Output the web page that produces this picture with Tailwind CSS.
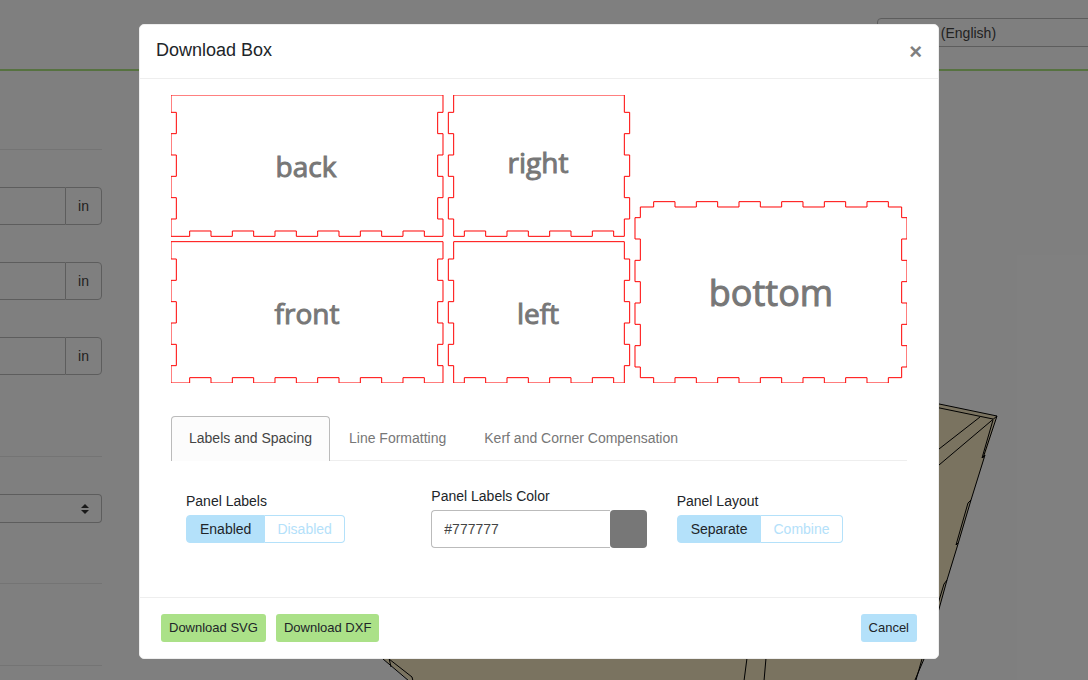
<!DOCTYPE html>
<html lang="en">
<head>
<meta charset="utf-8">
<meta name="viewport" content="width=device-width, initial-scale=1">
<title>Download Box</title>
<script src="https://cdn.jsdelivr.net/npm/@tailwindcss/browser@4"></script>
</head>
<body class="relative h-screen overflow-hidden bg-white font-['Liberation_Sans',Arial,sans-serif] text-sm text-[#444]">

<!-- Page behind the dialog -->
<header class="flex h-[71px] justify-end overflow-hidden border-b-2 border-[#ade480] pt-[18px]">
  <select aria-label="Language" class="-mr-4 h-[29px] w-[227px] shrink-0 appearance-none rounded border border-[#bbb] bg-white px-[13px] text-sm text-[#444]">
    <option>English (English)</option>
  </select>
</header>

<main>
  <section aria-label="Dimensions" class="w-[102px] pt-[78px]">
    <hr class="border-[#e8e8e8]">
    <div class="mt-[37px] flex flex-col gap-[37px]">
      <label class="flex h-[38px]">
        <input aria-label="Width" class="w-0 flex-1 border-y border-[#bbb]">
        <span class="flex w-[37px] items-center justify-center rounded-r border border-[#bbb]">in</span>
      </label>
      <label class="flex h-[38px]">
        <input aria-label="Height" class="w-0 flex-1 border-y border-[#bbb]">
        <span class="flex w-[37px] items-center justify-center rounded-r border border-[#bbb]">in</span>
      </label>
      <label class="flex h-[38px]">
        <input aria-label="Depth" class="w-0 flex-1 border-y border-[#bbb]">
        <span class="flex w-[37px] items-center justify-center rounded-r border border-[#bbb]">in</span>
      </label>
    </div>
    <hr class="mt-[81px] border-[#e8e8e8]">
    <div class="relative mt-[37px]">
      <select aria-label="Material" class="block h-[29px] w-full appearance-none rounded-r border border-l-0 border-[#bbb]"><option></option></select>
      <svg class="pointer-events-none absolute top-[10px] right-[13px] h-[10px] w-2" viewBox="0 0 8 10" fill="#333" aria-hidden="true"><path d="M0 4 4 0 8 4ZM0 6h8L4 10Z"/></svg>
    </div>
    <hr class="mt-[60px] border-[#e8e8e8]">
    <hr class="mt-[81px] border-[#e8e8e8]">
  </section>

  <!-- 3D preview -->
  <svg class="absolute top-0 left-0 h-[680px] w-[1088px]" viewBox="0 0 1088 680" fill="none" stroke="#000" stroke-width="1" aria-hidden="true">
    <path fill="#f4e6c0" stroke="none" d="M383 659 600 340 939 404 997 416 985 456 971 500 958 545 947 580 939 609 924 659 915 680H409Z"/>
    <path d="M920 400 997 416 983 458M930 406 993 419M939 449 980 417M939 465 997 416M993 420 982 458 985 455 971 500 958 544M971 500 968 503 956 545 958 543M958 544 947 580 939 609 924 659 915 680M947 580 944 584 930 630M922 659 916 680M383 659 409 681M389 659 412 677 413 681M389 658 391 667M747 658 744 681M766 658 764 681"/>
  </svg>
</main>

<!-- Dialog -->
<div class="absolute inset-0 flex items-start justify-center bg-black/50 pt-6 pr-[10px]">
  <div role="dialog" aria-modal="true" aria-labelledby="dialog-title" class="w-full max-w-[800px] rounded-[5px] border border-[#eee] bg-white">
    <div class="flex h-[54px] items-center justify-between border-b border-[#eee] px-4">
      <h1 id="dialog-title" class="pb-1 text-lg text-[#212529]">Download Box</h1>
      <button type="button" aria-label="Close" class="text-[22px] leading-6 font-bold text-[#7f7f7f]">×</button>
    </div>

    <div class="px-[31px] pt-4">
      <svg class="block w-full" viewBox="0 0 736 288" role="img" aria-label="Panel layout preview">
        <!-- One panel unit is the material thickness; the sheet is 138 by 54 units -->
        <g transform="scale(5.33333)" fill="none" stroke="#f00" stroke-width="0.1875">
          <path id="wide" d="M0 0H51V3.25H50V7.25H51V11.25H50V15.25H51V19.25H50V23.25H51V26.5H47.5V25.5H43.5V26.5H39.5V25.5H35.5V26.5H31.5V25.5H27.5V26.5H23.5V25.5H19.5V26.5H15.5V25.5H11.5V26.5H7.5V25.5H3.5V26.5H0V23.25H1V19.25H0V15.25H1V11.25H0V7.25H1V3.25H0Z"/>
          <use href="#wide" y="27.5"/>
          <path id="side" d="M53 0H85V3.25H86V7.25H85V11.25H86V15.25H85V19.25H86V23.25H85V26.5H83V25.5H79V26.5H75V25.5H71V26.5H67V25.5H63V26.5H59V25.5H55V26.5H53V23.25H52V19.25H53V15.25H52V11.25H53V7.25H52V3.25H53Z"/>
          <use href="#side" y="27.5"/>
          <path d="M88 21H90.5V20H94.5V21H98.5V20H102.5V21H106.5V20H110.5V21H114.5V20H118.5V21H122.5V20H126.5V21H130.5V20H134.5V21H137V23H138V27H137V31H138V35H137V39H138V43H137V47H138V51H137V53H134.5V54H130.5V53H126.5V54H122.5V53H118.5V54H114.5V53H110.5V54H106.5V53H102.5V54H98.5V53H94.5V54H90.5V53H88V51H87V47H88V43H87V39H88V35H87V31H88V27H87V23H88Z"/>
        </g>
        <g class="font-['Open_Sans',sans-serif] text-[28px]" fill="#777" stroke="#777" stroke-width="1" text-anchor="middle">
          <text x="135" y="82">back</text>
          <text x="367" y="78">right</text>
          <text x="136" y="229">front</text>
          <text x="367" y="229">left</text>
          <text x="600" y="211" class="text-[36px]">bottom</text>
        </g>
      </svg>

      <div role="tablist" class="mt-[33px] flex h-[45px] border-b border-[#eee]">
        <button type="button" role="tab" aria-selected="true" class="-mb-px rounded-t border border-b-0 border-[#bbb] bg-[#fcfcfc] px-[17px] pb-[2px] text-[#444]">Labels and Spacing</button>
        <button type="button" role="tab" aria-selected="false" class="px-[19px] text-[#777]">Line Formatting</button>
        <button type="button" role="tab" aria-selected="false" class="px-[19px] text-[#777]">Kerf and Corner Compensation</button>
      </div>

      <div role="tabpanel" class="grid h-[136px] grid-cols-3 items-start pt-[25px]">
        <div role="group" aria-labelledby="labels-name" class="px-[15px] pt-[5px]">
          <div id="labels-name" class="mb-1 leading-5 text-[#212529]">Panel Labels</div>
          <div class="inline-flex h-7">
            <button type="button" aria-pressed="true" class="rounded-l border border-[#b4e1fa] bg-[#b4e1fa] px-[13px] text-[#212529]">Enabled</button>
            <button type="button" aria-pressed="false" class="rounded-r border border-l-0 border-[#b4e1fa] px-3 text-[#b4e1fa]">Disabled</button>
          </div>
        </div>
        <div class="px-[15px]">
          <label for="color" class="mb-1 block leading-5 text-[#212529]">Panel Labels Color</label>
          <div class="flex h-[38px]">
            <input id="color" value="#777777" class="w-0 flex-1 rounded-l border border-r-0 border-[#bbb] px-3 text-[#444]">
            <button type="button" aria-label="Pick color" class="w-[37px] rounded bg-[#777]"></button>
          </div>
        </div>
        <div role="group" aria-labelledby="layout-name" class="px-[15px] pt-[5px]">
          <div id="layout-name" class="mb-1 leading-5 text-[#212529]">Panel Layout</div>
          <div class="inline-flex h-7">
            <button type="button" aria-pressed="true" class="rounded-l border border-[#b4e1fa] bg-[#b4e1fa] px-[13px] text-[#212529]">Separate</button>
            <button type="button" aria-pressed="false" class="rounded-r border border-l-0 border-[#b4e1fa] px-3 text-[#b4e1fa]">Combine</button>
          </div>
        </div>
      </div>
    </div>

    <div class="flex gap-[10px] border-t border-[#eee] px-[21px] py-4 text-[13px] text-[#212529]">
      <button type="button" class="h-7 rounded-[3px] bg-[#abe188] px-2">Download SVG</button>
      <button type="button" class="h-7 rounded-[3px] bg-[#abe188] px-2">Download DXF</button>
      <button type="button" class="ml-auto h-7 rounded-[3px] bg-[#b4e1fa] px-2">Cancel</button>
    </div>
  </div>
</div>
</body>
</html>
